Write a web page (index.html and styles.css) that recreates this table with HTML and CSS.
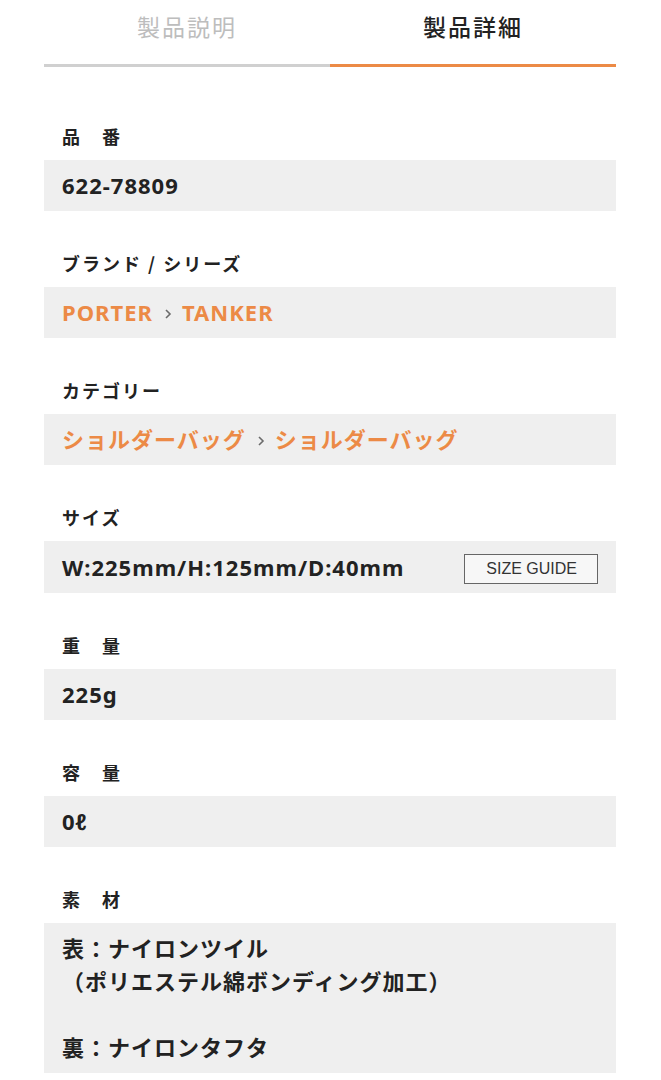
FILE: index.html
```html
<!DOCTYPE html>
<html lang="ja">
<head>
<meta charset="utf-8">
<link rel="stylesheet" href="styles.css">
</head>
<body>
<div class="page">
  <div class="tabs">
    <div class="tab">製品説明</div>
    <div class="tab tab-active">製品詳細</div>
  </div>
  <div class="specs">
    <div class="spec">
      <div class="label">品　番</div>
      <div class="value">622-78809</div>
    </div>
    <div class="spec">
      <div class="label">ブランド / シリーズ</div>
      <div class="value link">PORTER<svg class="chev" width="8" height="12" viewBox="0 0 8 12"><path d="M2 2 L6 6 L2 10" fill="none" stroke="#6b6b6b" stroke-width="1.6"/></svg>TANKER</div>
    </div>
    <div class="spec">
      <div class="label">カテゴリー</div>
      <div class="value link">ショルダーバッグ<svg class="chev" width="8" height="12" viewBox="0 0 8 12"><path d="M2 2 L6 6 L2 10" fill="none" stroke="#6b6b6b" stroke-width="1.6"/></svg>ショルダーバッグ</div>
    </div>
    <div class="spec">
      <div class="label">サイズ</div>
      <div class="value value-row"><span>W:225mm/H:125mm/D:40mm</span><span class="guide">SIZE GUIDE</span></div>
    </div>
    <div class="spec">
      <div class="label">重　量</div>
      <div class="value">225g</div>
    </div>
    <div class="spec">
      <div class="label">容　量</div>
      <div class="value">0ℓ</div>
    </div>
    <div class="spec">
      <div class="label">素　材</div>
      <div class="value">表：ナイロンツイル<br>（ポリエステル綿ボンディング加工）<br><br>裏：ナイロンタフタ</div>
    </div>
  </div>
</div>
</body>
</html>
```

FILE: styles.css
```css
* { box-sizing: border-box; }
html, body { margin: 0; padding: 0; background: #fff; }
body {
  font-family: "Noto Sans CJK JP", "Noto Sans", sans-serif;
  color: #222;
}
.page {
  padding: 0 45px 0 44px;
}
.tabs {
  display: flex;
}
.tab {
  flex: 1;
  height: 67px;
  padding-top: 8px;
  text-align: center;
  font-size: 23px;
  line-height: 36px;
  letter-spacing: 2px;
  color: #bdbdbd;
  border-bottom: 3px solid #d0d0d0;
}
.tab-active {
  color: #222;
  font-weight: 500;
  border-bottom-color: #ec8a46;
}
.specs {
  padding-top: 57px;
  display: flex;
  flex-direction: column;
  gap: 40px;
}
.spec {
  display: flex;
  flex-direction: column;
  gap: 12px;
}
.label {
  padding-left: 18px;
  font-size: 18px;
  line-height: 24px;
  font-weight: 700;
  letter-spacing: 2px;
}
.value {
  background: #efefef;
  padding: 9px 18px;
  font-family: "Noto Sans", "Noto Sans CJK JP", sans-serif;
  font-size: 22px;
  line-height: 33px;
  font-weight: 700;
  letter-spacing: 1px;
}
.link {
  color: #ec8a46;
  display: flex;
  align-items: center;
}
.chev {
  margin: 2px 10px 0 11px;
}
.value-row {
  display: flex;
  align-items: center;
  justify-content: space-between;
}
.guide {
  font-family: "Liberation Sans", Arial, sans-serif;
  font-weight: 400;
  font-size: 16px;
  letter-spacing: 0;
  line-height: 28px;
  height: 30px;
  margin-top: 4px;
  padding: 0 20px 0 21px;
  border: 1px solid #666;
  background: #f7f7f7;
  color: #333;
}
```
